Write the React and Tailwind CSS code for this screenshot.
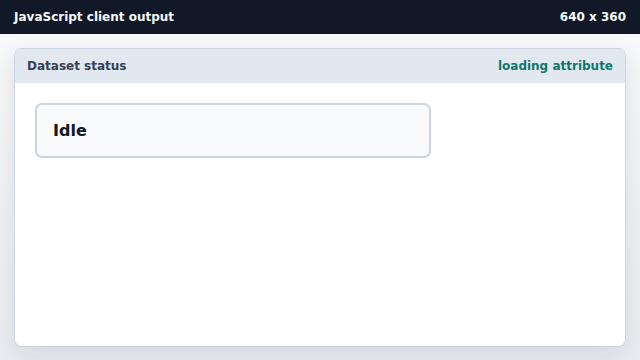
const App = () => {
  return (
    <div
      className="w-[640px] h-[360px] flex flex-col bg-gradient-to-b from-[#f8fafc] to-[#e9ecf0] overflow-hidden"
      style={{ fontFamily: '"DejaVu Sans", sans-serif' }}
    >
      {/* Top bar */}
      <div className="h-[34px] shrink-0 flex items-center justify-between px-[14px] bg-[#111827] text-[#f8fafc] text-[12px] font-bold">
        <span>JavaScript client output</span>
        <span>640 x 360</span>
      </div>

      <div className="flex-1 flex flex-col pt-[14px] pb-[13px] px-[14px]">
        <div className="flex-1 flex flex-col bg-white border border-[#cbd5e1] rounded-[8px] shadow-[0_8px_24px_rgba(15,23,42,0.10)] overflow-hidden">
          <div className="h-[34px] shrink-0 flex items-center justify-between px-[12px] bg-[#e2e8f0] text-[12px] font-bold">
            <span className="text-[#334155]">Dataset status</span>
            <span className="text-[#0f766e]">loading attribute</span>
          </div>
          <div className="pt-[20px] pl-[20px]">
            <div className="w-[396px] h-[55px] flex items-center px-[16px] bg-[#f8fafc] border-2 border-[#cbd5e1] rounded-[7px]">
              <span className="text-[16px] font-bold text-[#0f172a]">Idle</span>
            </div>
          </div>
        </div>
      </div>
    </div>
  );
};

export default App;
